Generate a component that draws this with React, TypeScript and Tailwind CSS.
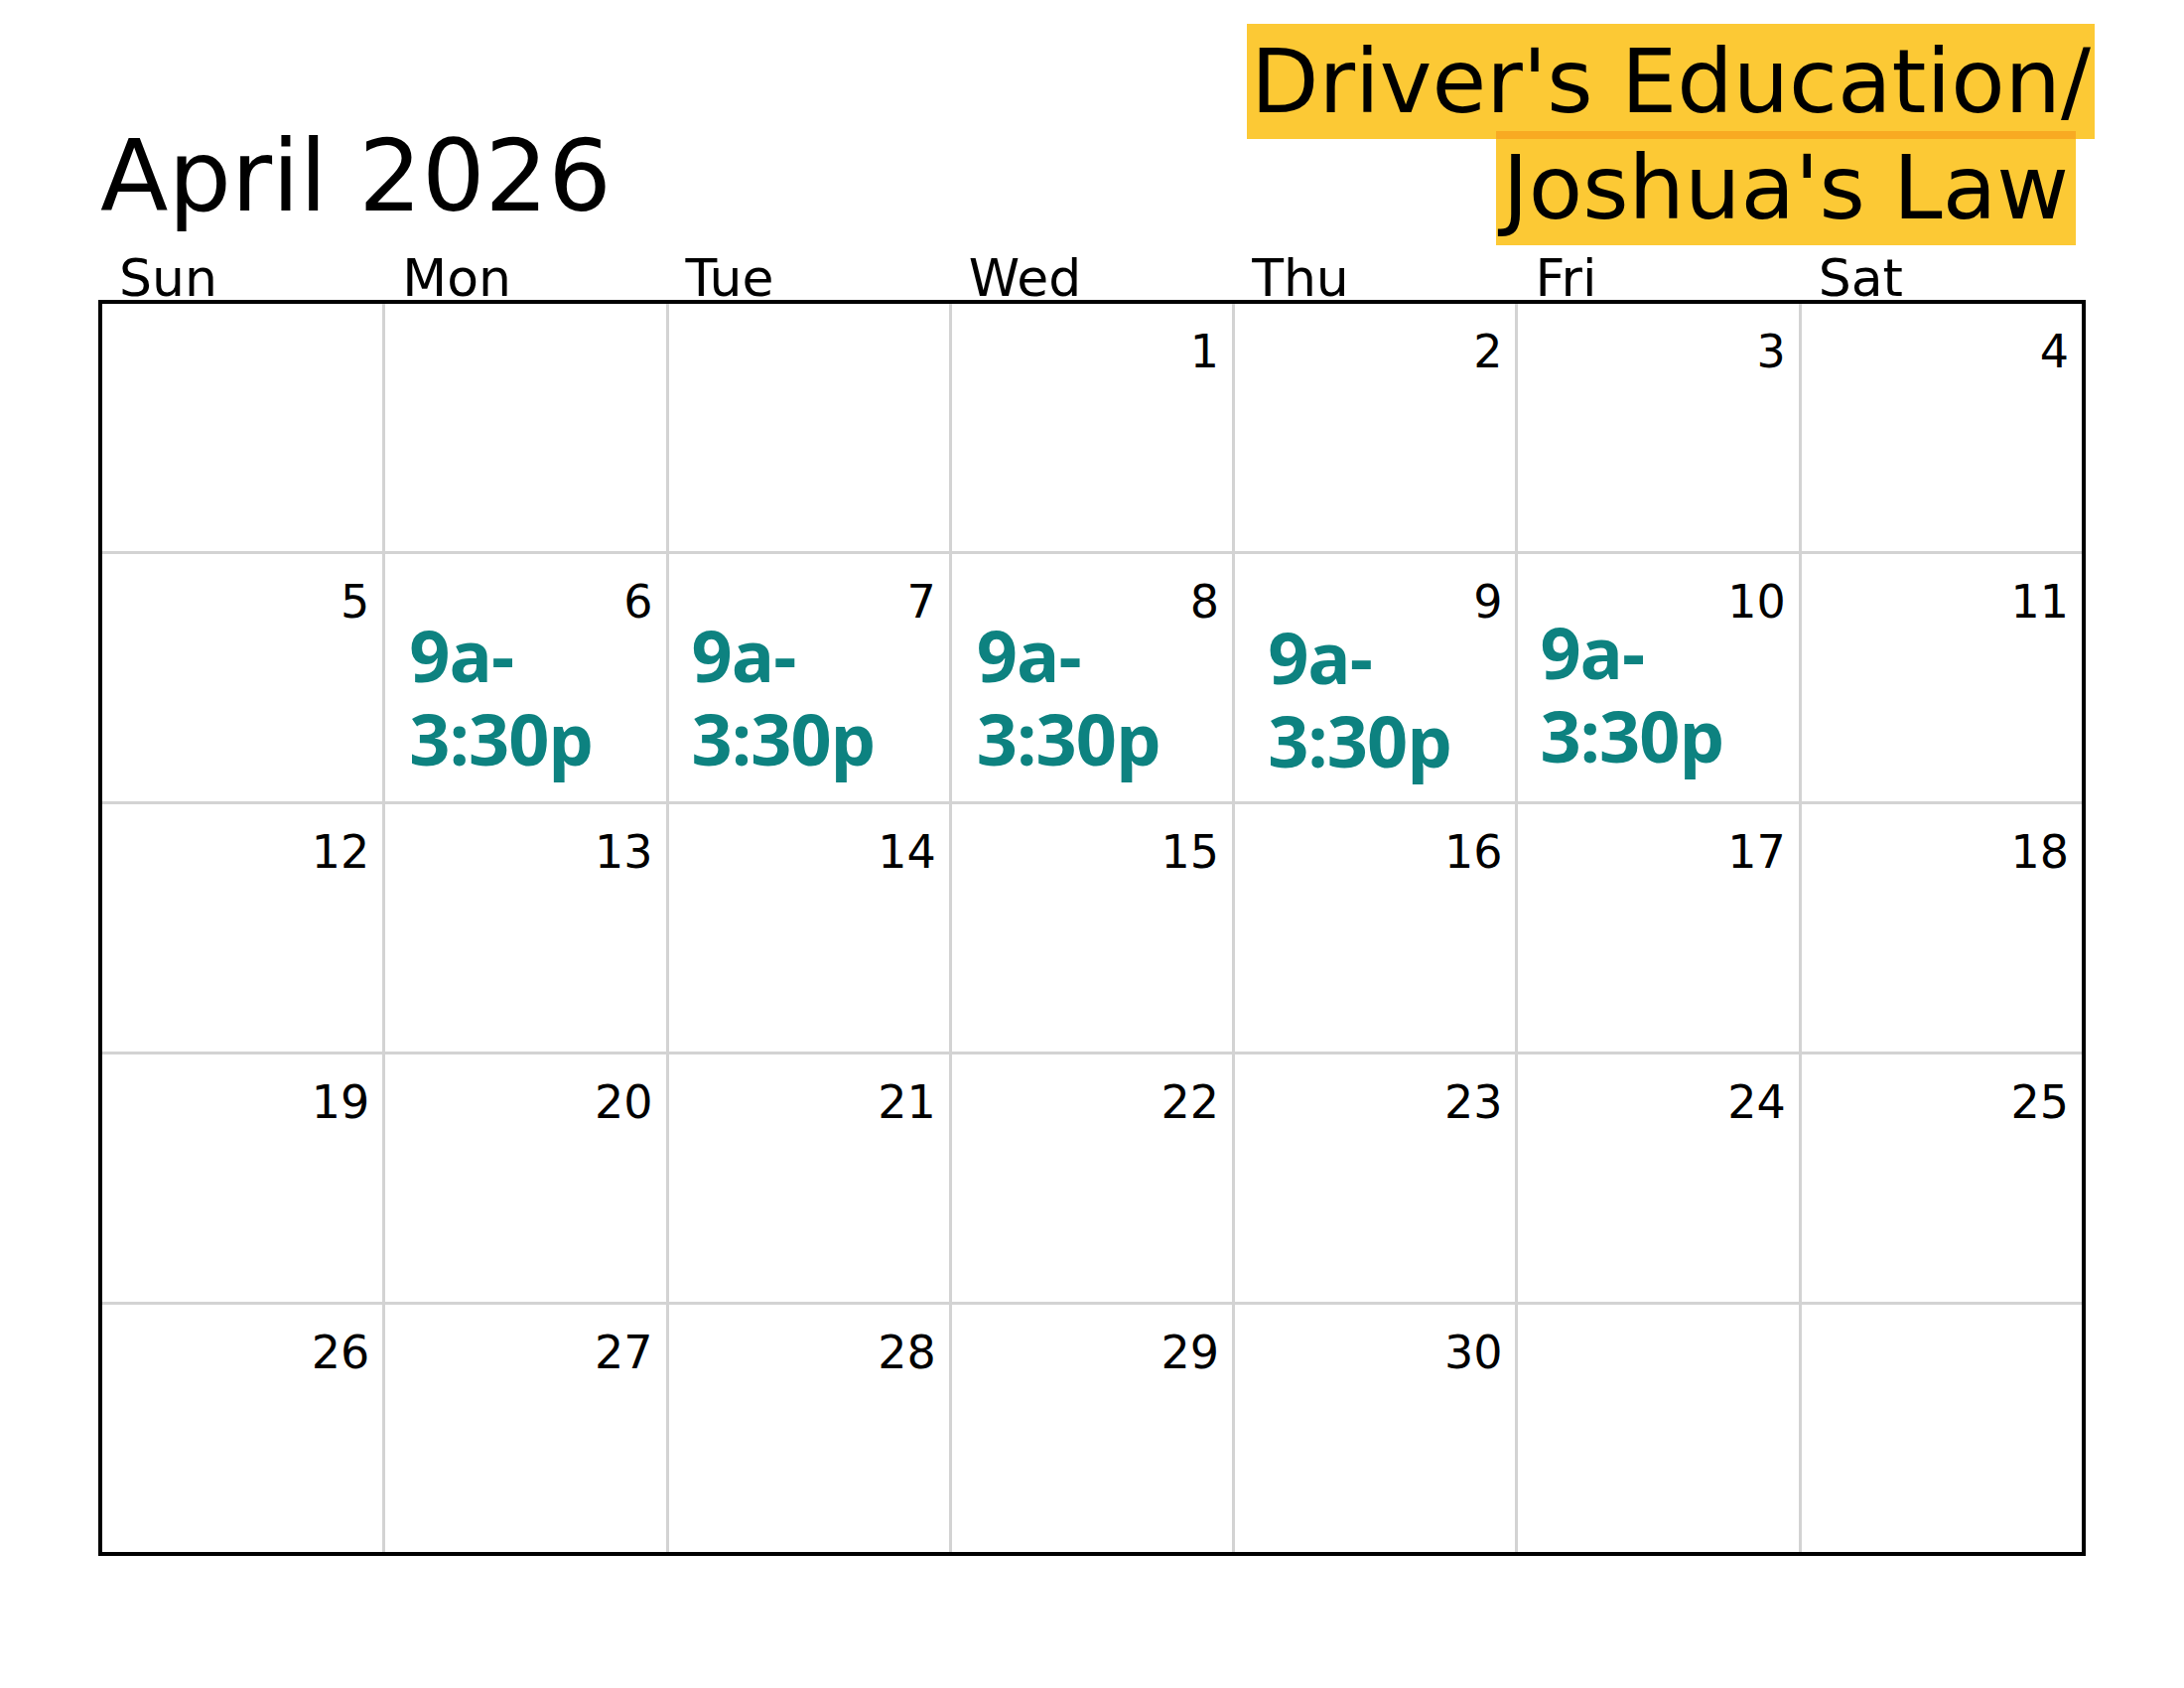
import React from 'react';

const days = ['Sun', 'Mon', 'Tue', 'Wed', 'Thu', 'Fri', 'Sat'];

// April 2026 starts on a Wednesday
const cells: (number | null)[] = [
  null, null, null, 1, 2, 3, 4,
  5, 6, 7, 8, 9, 10, 11,
  12, 13, 14, 15, 16, 17, 18,
  19, 20, 21, 22, 23, 24, 25,
  26, 27, 28, 29, 30, null, null,
];

// class-day offsets are a bit uneven in the source, keep them per day
const classDays: Record<number, string> = {
  6: 'pl-[24px] -mt-[12px]',
  7: 'pl-[23px] -mt-[12px]',
  8: 'pl-[25px] -mt-[12px]',
  9: 'pl-[33px] -mt-[10px]',
  10: 'pl-[22px] -mt-[15px]',
};

const DayCell = ({ day }: { day: number | null }) => {
  const cls = day ? classDays[day] : undefined;
  return (
    <div className="bg-white flex flex-col min-h-0">
      {day && (
        <div className="text-right pr-[13px] pt-[25px] text-[46px] leading-[46px] text-black font-['DejaVu_Sans',sans-serif]">
          {day}
        </div>
      )}
      {cls && (
        <div
          className={`${cls} text-[72px] leading-[84px] font-bold tracking-[-1px] text-[#0d8280] font-['Open_Sans',sans-serif]`}
        >
          9a-
          <br />
          3:30p
        </div>
      )}
    </div>
  );
};

export default function App() {
  return (
    <div className="w-[2200px] h-[1700px] bg-white pl-[99px] pt-[24px] font-['DejaVu_Sans',sans-serif] text-black">
      <div className="w-[2002px] h-[223px] flex items-start">
        <h1 className="mt-[104px] ml-[2px] text-[100px] leading-[100px] font-normal">April 2026</h1>
        <div className="ml-auto -mr-[9px] flex flex-col items-end">
          <div className="bg-[#fcc935] px-[4px] text-[89px] leading-[116px]">Driver's Education/</div>
          <div className="-mt-[8px] mr-[19px] bg-[#fcc935] shadow-[inset_0_8px_0_#f8aa22] px-[7px] text-[89px] leading-[115px]">
            Joshua's Law
          </div>
        </div>
      </div>

      <div className="w-[2002px] h-[55px] px-[4px] grid grid-cols-7 gap-[3px]">
        {days.map((d) => (
          <div key={d} className="pl-[17px] pt-[7px] text-[52px] leading-[52px]">
            {d}
          </div>
        ))}
      </div>

      <div className="w-[2002px] h-[1265px] border-[4px] border-black bg-[#d3d3d3] grid grid-cols-7 grid-rows-5 gap-[3px]">
        {cells.map((d, i) => (
          <DayCell key={i} day={d} />
        ))}
      </div>
    </div>
  );
}
